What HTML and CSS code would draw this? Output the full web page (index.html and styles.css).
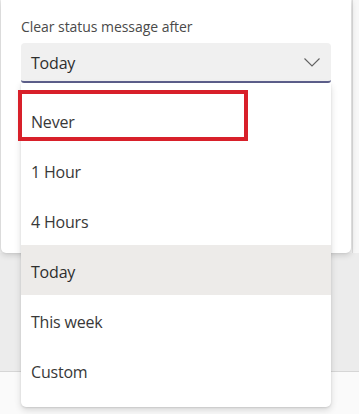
FILE: index.html
```html
<!DOCTYPE html>
<html lang="en">
<head>
<meta charset="utf-8">
<title>Clear status message after</title>
<link rel="stylesheet" href="styles.css">
</head>
<body>
<div class="page">
  <div class="top-row">
    <div class="card">
      <div class="label">Clear status message after</div>
      <div class="select">
        <span class="select-value">Today</span>
        <svg class="chevron" width="16" height="9" viewBox="0 0 16 9" aria-hidden="true"><path d="M0.5 0.5 L8 8 L15.5 0.5" fill="none" stroke="#616161" stroke-width="1.1"/></svg>
      </div>
    </div>
    <div class="side"></div>
  </div>
  <div class="below"></div>
  <div class="below-light"></div>

  <ul class="menu">
    <li class="item">Never</li>
    <li class="item">1 Hour</li>
    <li class="item">4 Hours</li>
    <li class="item selected">Today</li>
    <li class="item">This week</li>
    <li class="item">Custom</li>
  </ul>
  <div class="highlight-box"></div>
</div>
</body>
</html>
```
FILE: styles.css
```css
* { box-sizing: border-box; }
html, body {
  margin: 0;
  padding: 0;
}
body {
  width: 359px;
  height: 414px;
  overflow: hidden;
  background: #f2f2f2;
  font-family: "Open Sans", "Noto Sans", sans-serif;
  color: #242424;
}
.page {
  position: relative;
  width: 359px;
  height: 414px;
  display: flex;
  flex-direction: column;
}
.top-row {
  display: flex;
  height: 253px;
}
.card {
  width: 350px;
  margin-left: 1px;
  height: 253px;
  background: #ffffff;
  border-radius: 0 0 5px 5px;
  box-shadow: 0 2px 6px rgba(0,0,0,0.16), 0 0 2px rgba(0,0,0,0.1);
  padding: 16px 20px 0 20px;
  position: relative;
  z-index: 1;
}
.side {
  flex: 1;
  margin-left: 1px;
  border-left: 1px solid #dcdcdc;
  background: #f7f7f7;
}
.label {
  font-size: 14px;
  line-height: 20px;
  color: #4a4a4a;
  letter-spacing: -0.05px;
  padding-top: 1px;
}
.select {
  margin-top: 6px;
  height: 40px;
  background: #f0f0f0;
  border-radius: 4px 4px 3px 3px;
  border-bottom: 2px solid #5e608c;
  display: flex;
  align-items: center;
  justify-content: space-between;
  padding: 0 11px 0 10px;
}
.select-value {
  font-size: 16px;
  color: #2e2e2e;
  letter-spacing: -0.2px;
  padding-top: 2px;
}
.chevron { display: block; margin-top: 1px; }
.below {
  height: 119px;
  background: #ececec;
  border-bottom: 1px solid #d6d6d6;
}
.below-light {
  flex: 1;
  background: #fafafa;
}
.menu {
  position: absolute;
  left: 21px;
  top: 83px;
  width: 310px;
  margin: 0;
  padding: 12px 0;
  list-style: none;
  background: #ffffff;
  border-radius: 0 0 5px 5px;
  box-shadow: 0 3px 7px rgba(0,0,0,0.14), 0 1px 2px rgba(0,0,0,0.1);
  z-index: 2;
}
.item {
  height: 50px;
  display: flex;
  align-items: center;
  padding-left: 10px;
  padding-top: 3px;
  font-size: 16px;
  color: #383838;
  letter-spacing: -0.2px;
}
.item.selected {
  background: #edebe9;
  color: #2e2e2e;
}
.highlight-box {
  position: absolute;
  left: 18px;
  top: 90px;
  width: 230px;
  height: 51px;
  border: 4px solid #d8202a;
  z-index: 3;
}
```
